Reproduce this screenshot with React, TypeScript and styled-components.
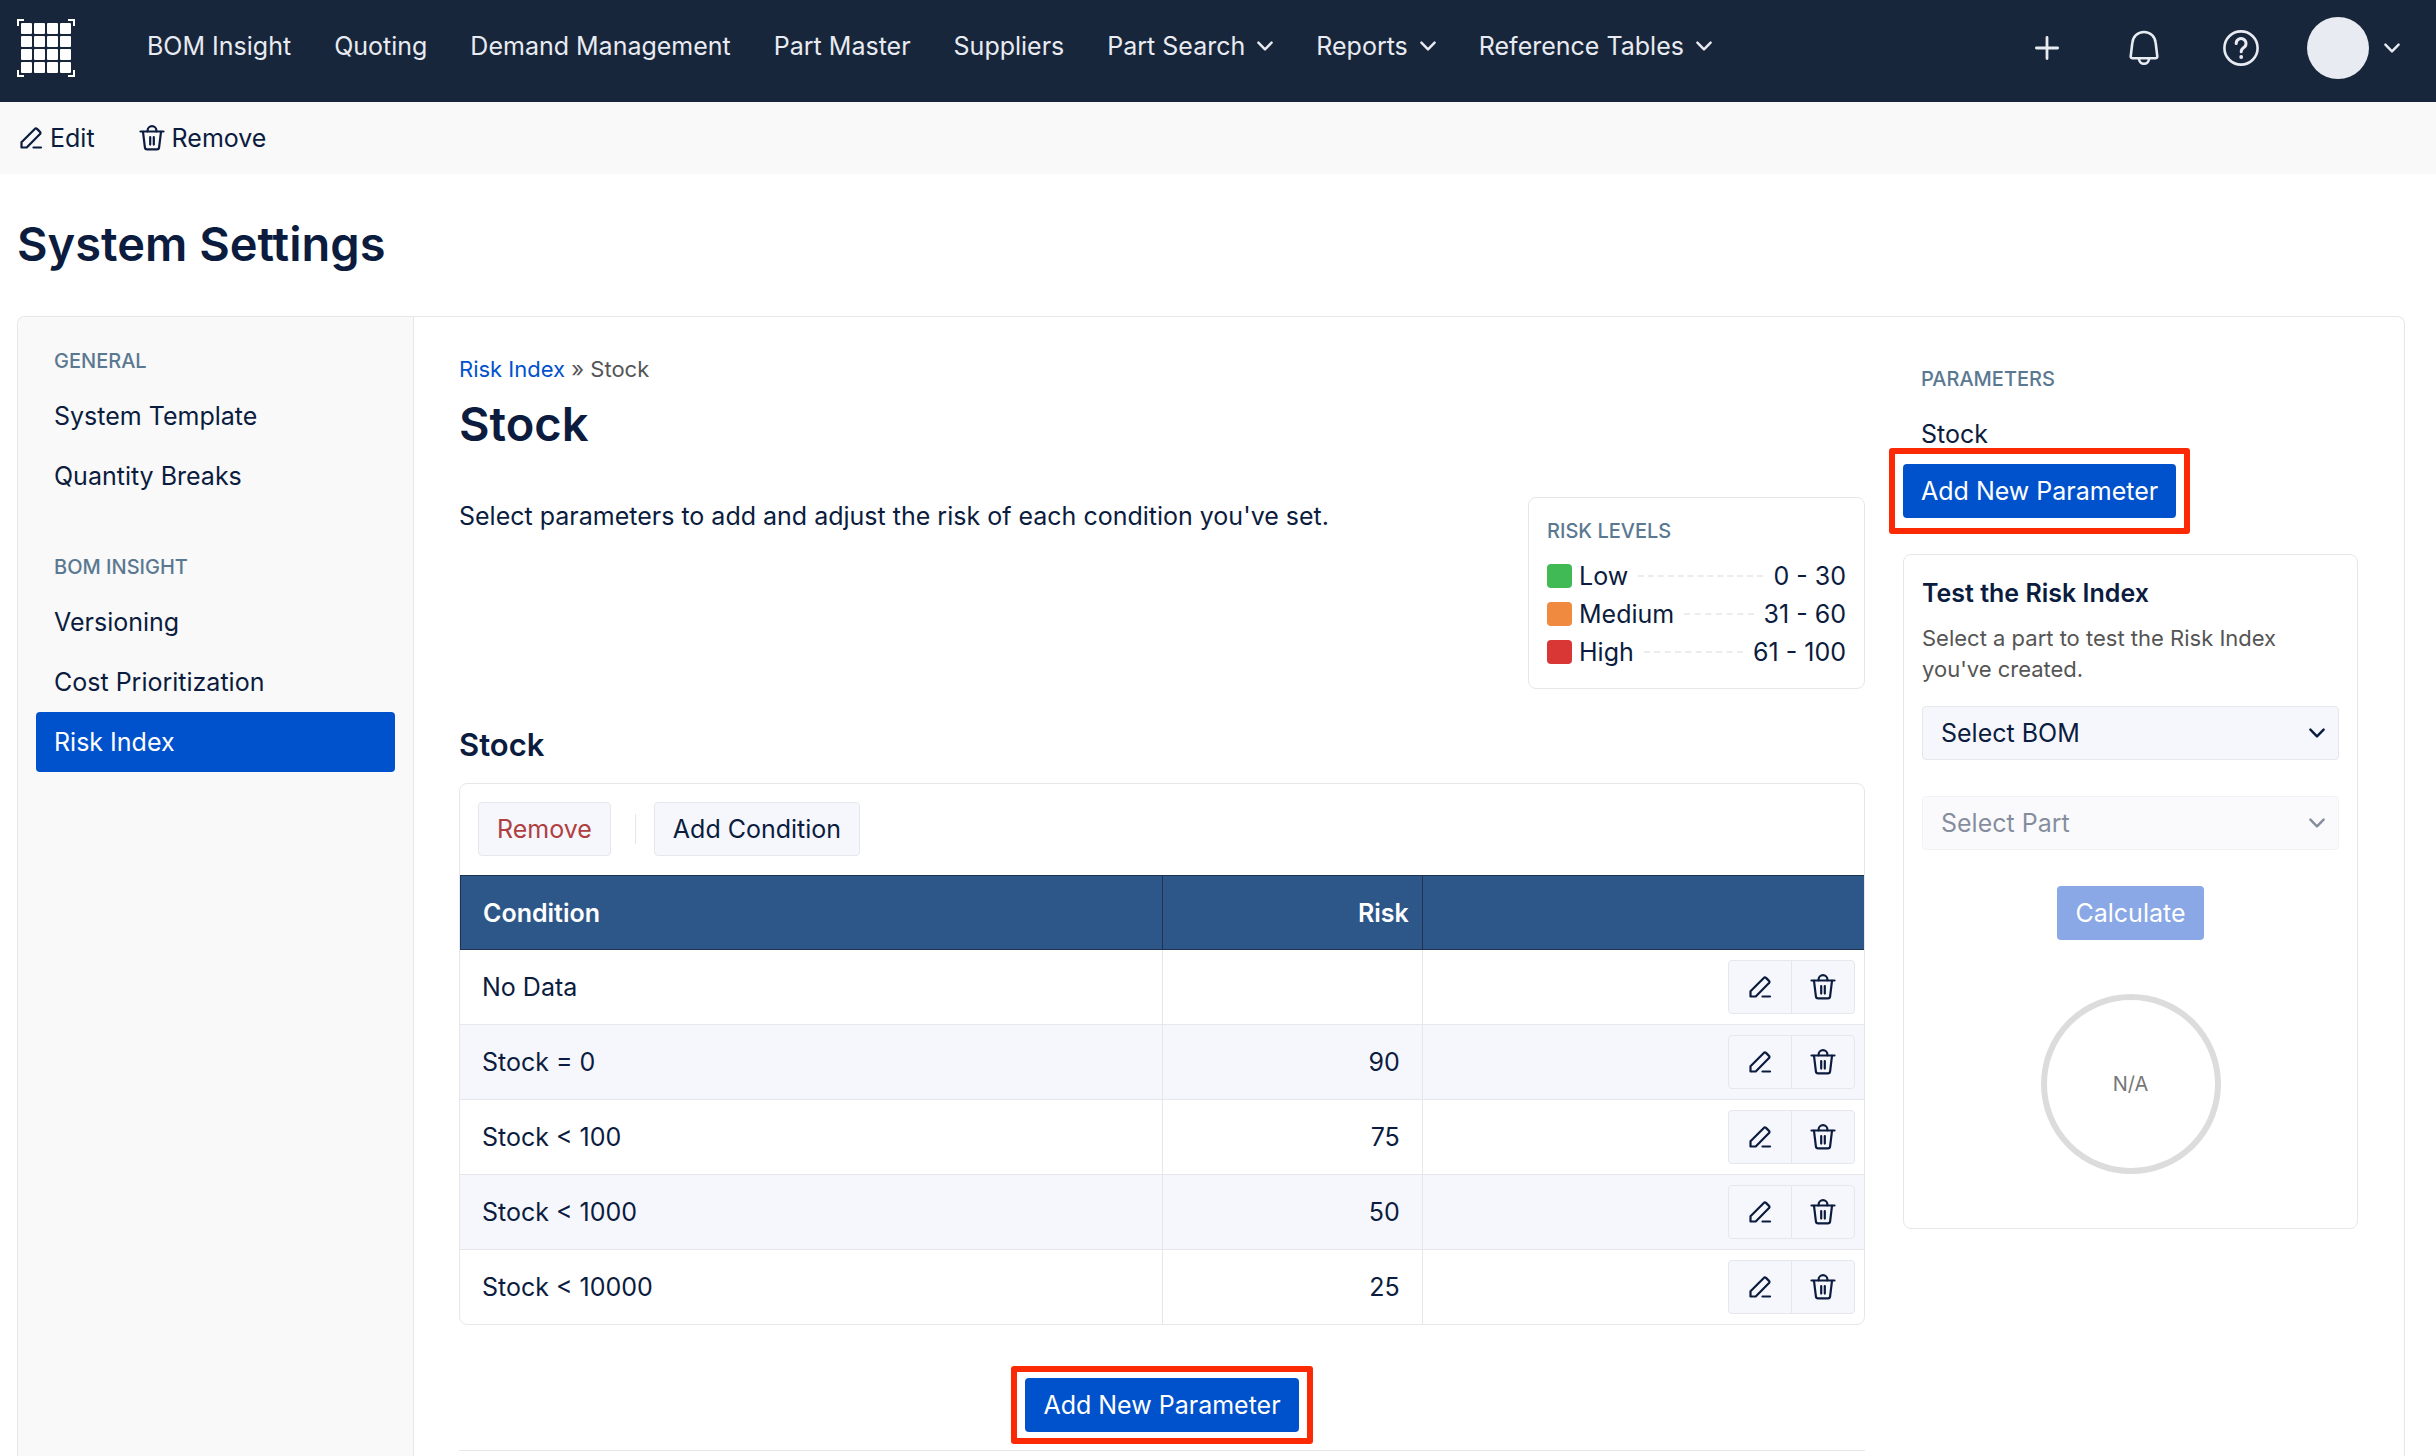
import React from "react";
import styled, { createGlobalStyle, css } from "styled-components";

const color = {
  navy: "#18263c",
  ink: "#0b1c3e",
  muted: "#5b7891",
  gray: "#555555",
  line: "#e6e7ea",
  soft: "#f9f9f9",
  tint: "#f6f7fd",
  blue: "#0052cc",
  header: "#2d5788",
  headerLine: "#1f3350",
  light: "#e8ebf1",
  mark: "#fb2a05",
};

const GlobalStyle = createGlobalStyle`
  *, *::before, *::after { box-sizing: border-box; }
  body {
    margin: 0;
    background: #ffffff;
    color: ${color.ink};
    font-family: Inter, "Liberation Sans", sans-serif;
    font-size: 25px;
    line-height: 32px;
  }
  button, select { font: inherit; color: inherit; }
  h1, h2, h3, p, ul, dl, dd { margin: 0; padding: 0; }
  ul { list-style: none; }
  a { color: inherit; text-decoration: none; }
`;

/* ---------- icons ---------- */

const Icon = styled.svg<{ $size: number }>`
  display: block;
  flex: none;
  width: ${(p) => p.$size}px;
  height: ${(p) => p.$size}px;
  fill: none;
  stroke: currentColor;
  stroke-linecap: round;
  stroke-linejoin: round;
`;

const ChevronDown = () => (
  <Icon $size={16} viewBox="0 0 16 16" strokeWidth="2.4" aria-hidden="true">
    <path d="M1.4 4.600 8 11.400l6.600-6.800" />
  </Icon>
);

const PenIcon = () => (
  <Icon $size={24} viewBox="0 0 24 24" strokeWidth="2.2" aria-hidden="true">
    <path d="M2.500 21.500v-5.200L15.800 2.900a1.500 1.500 0 0 1 2.200 0l3 3a1.500 1.500 0 0 1 0 2.200L7.700 21.500H2.500Z" />
    <path d="M14.500 21.500h7.500" />
  </Icon>
);

const TrashIcon = () => (
  <Icon $size={26} viewBox="0 0 26 26" strokeWidth="2.2" aria-hidden="true">
    <path d="M1.500 6.500h23" />
    <path d="M8.600 6.300V5.600a4.400 4.400 0 0 1 8.800 0v.7" />
    <path d="M4 6.800l1.900 15.600a2.200 2.200 0 0 0 2.200 2h9.800a2.200 2.200 0 0 0 2.200-2L22 6.800" />
    <path d="M11.200 12v7.600M14.800 12v7.600" />
  </Icon>
);

const PlusIcon = () => (
  <Icon $size={26} viewBox="0 0 26 26" strokeWidth="2.8" aria-hidden="true">
    <path d="M13 2.400v21.200M2.400 13h21.200" />
  </Icon>
);

const BellIcon = () => (
  <Icon $size={36} viewBox="0 0 36 36" strokeWidth="2.6" aria-hidden="true">
    <path d="M18 2C11.400 2 6.900 6.800 6.300 13L4.700 26.400a1.700 1.700 0 0 0 1.700 1.900h23.200a1.700 1.700 0 0 0 1.700-1.900L29.700 13C29.100 6.800 24.600 2 18 2Z" />
    <path d="M13 28.500a5 5.300 0 0 0 10 0" />
  </Icon>
);

const HelpIcon = () => (
  <Icon $size={38} viewBox="0 0 38 38" strokeWidth="2.6" aria-hidden="true">
    <circle cx="19" cy="19" r="16.600" />
    <path d="M14.200 14.600a4.900 4.900 0 1 1 7.600 4c-1.800 1.200-2.600 2-2.600 4.200" strokeWidth="3" />
    <circle cx="19.200" cy="28" r="1.900" fill="currentColor" stroke="none" />
  </Icon>
);

const LogoMark = () => {
  const steps = [0, 1, 2, 3];
  return (
    <Icon $size={58} viewBox="0 0 58 58" aria-hidden="true">
      {steps.map((r) =>
        steps.map((c) => (
          <rect key={`${r}-${c}`} x={4 + c * 13} y={4 + r * 13} width="11" height="11" rx="1" fill="#fff" stroke="none" />
        ))
      )}
      <path
        d="M1 7V1h6M51 1h6v6M57 51v6h-6M7 57H1v-6"
        stroke="#fff"
        strokeWidth="2"
        strokeLinecap="butt"
        strokeLinejoin="miter"
      />
    </Icon>
  );
};

/* ---------- shell ---------- */

const Page = styled.div`
  display: flex;
  flex-direction: column;
  min-height: 100vh;
`;

const TopBar = styled.header`
  display: flex;
  align-items: center;
  height: 102px;
  padding: 0 36px 6px 17px;
  background: ${color.navy};
  color: ${color.light};
`;

const MainNav = styled.nav`
  display: flex;
  align-items: center;
  gap: 43px;
  margin-left: 72px;
  padding-bottom: 4px;
`;

const NavLink = styled.a`
  display: flex;
  align-items: center;
  gap: 12px;
  white-space: nowrap;
`;

const TopActions = styled.div`
  display: flex;
  align-items: center;
  margin-left: auto;
  gap: 60px;
`;

const IconButton = styled.button`
  display: flex;
  align-items: center;
  justify-content: center;
  padding: 0;
  border: 0;
  background: none;
`;

const TopButton = styled(IconButton)`
  width: 37px;
`;

const AccountButton = styled(IconButton)`
  gap: 15px;
  margin-left: -12px;
`;

const Avatar = styled.span`
  width: 62px;
  height: 62px;
  border-radius: 50%;
  background: ${color.light};
`;

const ActionBar = styled.div`
  display: flex;
  align-items: center;
  gap: 44px;
  height: 72px;
  padding: 0 19px;
  background: ${color.soft};
`;

const ActionButton = styled(IconButton)`
  gap: 7px;
`;

const PageTitle = styled.h1`
  font-size: 47px;
  line-height: 60px;
  font-weight: 600;
`;

const TitleRow = styled.div`
  padding: 40px 17px 42px;
`;

const Panel = styled.div`
  display: flex;
  flex: 1;
  margin: 0 31px 0 17px;
  border: 1px solid ${color.line};
  border-bottom: 0;
  border-radius: 8px 8px 0 0;
`;

/* ---------- side menu ---------- */

const SideMenu = styled.nav`
  display: flex;
  flex: none;
  flex-direction: column;
  gap: 46px;
  width: 396px;
  padding: 29px 18px;
  border-right: 1px solid ${color.line};
  border-radius: 7px 0 0 0;
  background: ${color.soft};
`;

const Caption = styled.h3`
  font-size: 20px;
  line-height: 30px;
  font-weight: 500;
  color: ${color.muted};
  text-transform: uppercase;
`;

const MenuCaption = styled(Caption)`
  padding: 0 18px;
  margin-bottom: 10px;
`;

const MenuLink = styled.a<{ $active?: boolean }>`
  display: block;
  padding: 14px 18px;
  border-radius: 4px;
  ${(p) =>
    p.$active &&
    css`
      background: ${color.blue};
      color: #ffffff;
    `}
`;

/* ---------- centre column ---------- */

const Content = styled.main`
  flex: 1;
  min-width: 0;
  padding: 36px 38px 4px 45px;
`;

const Breadcrumb = styled.nav`
  font-size: 22px;
  line-height: 32px;
  color: ${color.gray};
  a { color: ${color.blue}; }
`;

const SectionTitle = styled.h2`
  margin-top: 9px;
  font-size: 47px;
  line-height: 60px;
  font-weight: 600;
`;

const IntroRow = styled.div`
  display: flex;
  align-items: flex-start;
  justify-content: space-between;
  margin-top: 43px;
`;

const Intro = styled.p`
  padding-top: 3px;
`;

const Card = styled.section`
  border: 1px solid ${color.line};
  border-radius: 8px;
`;

const RiskCard = styled(Card)`
  width: 337px;
  padding: 18px 18px 20px;
`;

const LevelList = styled.dl`
  display: grid;
  gap: 6px;
  margin-top: 14px;
`;

const Level = styled.div`
  display: flex;
  align-items: center;
`;

const Swatch = styled.span<{ $color: string }>`
  width: 25px;
  height: 24px;
  margin-right: 7px;
  border-radius: 4px;
  background: ${(p) => p.$color};
`;

const Leader = styled.span`
  flex: 1;
  margin: 0 10px;
  border-top: 2px dashed #ececee;
`;

const GroupTitle = styled.h3`
  margin-top: 36px;
  font-size: 31px;
  line-height: 40px;
  font-weight: 600;
`;

const TableCard = styled(Card)`
  margin-top: 18px;
  overflow: hidden;
`;

const TableTools = styled.div`
  display: flex;
  align-items: center;
  padding: 18px 18px 19px;
`;

const Button = styled.button<{ $danger?: boolean }>`
  padding: 10px 18px;
  border: 1px solid ${color.line};
  border-radius: 4px;
  background: ${color.tint};
  color: ${(p) => (p.$danger ? "#b04040" : color.ink)};
  white-space: nowrap;
`;

const PrimaryButton = styled.button`
  padding: 11px 18px;
  border: 0;
  border-radius: 4px;
  background: ${color.blue};
  color: #ffffff;
  white-space: nowrap;
  &:disabled { background: #8aa8e5; }
`;

const Divider = styled.span`
  width: 1px;
  height: 30px;
  margin: 0 18px 0 24px;
  background: ${color.line};
`;

const Table = styled.table`
  width: 100%;
  table-layout: fixed;
  border-collapse: separate;
  border-spacing: 0;
`;

const HeadCell = styled.th<{ $width?: string; $right?: boolean }>`
  width: ${(p) => p.$width ?? "auto"};
  height: 75px;
  padding: 0 13px 0 22px;
  border: 1px solid ${color.headerLine};
  border-right: 0;
  background: ${color.header};
  color: #ffffff;
  font-weight: 600;
  text-align: ${(p) => (p.$right ? "right" : "left")};
`;

const Cell = styled.td<{ $right?: boolean }>`
  height: 75px;
  padding: 0 22px;
  border-bottom: 1px solid ${color.line};
  text-align: ${(p) => (p.$right ? "right" : "left")};
  & + & { border-left: 1px solid ${color.line}; }
`;

const ToolsCell = styled(Cell)`
  padding: 0 9px;
  border-left: 1px solid ${color.line};
`;

const Row = styled.tr`
  &:nth-child(even) { background: ${color.tint}; }
  &:last-child > td { height: 74px; border-bottom: 0; }
`;

const RowTools = styled.div`
  display: flex;
  justify-content: flex-end;
`;

const RowTool = styled.button`
  display: flex;
  align-items: center;
  justify-content: center;
  width: 64px;
  height: 54px;
  padding: 0;
  border: 1px solid ${color.line};
  background: ${color.tint};
  &:first-child { border-radius: 4px 0 0 4px; }
  &:last-child { margin-left: -1px; border-radius: 0 4px 4px 0; }
`;

const AddRow = styled.div`
  display: flex;
  justify-content: center;
  padding: 53px 0 18px;
  border-bottom: 1px solid ${color.line};
`;

/* Red call-out frame laid over the area around a button. */
const Highlight = styled.div<{ $tight?: boolean }>`
  position: relative;
  width: fit-content;
  &::after {
    content: "";
    position: absolute;
    inset: ${(p) => (p.$tight ? "-12px -14px" : "-16px -14px")};
    border: 6px solid ${color.mark};
    border-radius: 3px;
    pointer-events: none;
  }
`;

/* ---------- right column ---------- */

const Aside = styled.aside`
  flex: none;
  width: 501px;
  padding: 47px 46px 0 0;
`;

const TestCard = styled(Card)`
  margin-top: 36px;
  padding: 20px 18px 54px;
`;

const CardTitle = styled.h3`
  font-size: 25px;
  line-height: 36px;
  font-weight: 600;
`;

const Note = styled.p`
  margin: 12px 0 21px;
  font-size: 22px;
  line-height: 31px;
  color: ${color.gray};
`;

const SelectField = styled.label<{ $disabled?: boolean }>`
  position: relative;
  display: block;
  margin-bottom: 36px;
  opacity: ${(p) => (p.$disabled ? 0.5 : 1)};
  svg {
    position: absolute;
    top: 19px;
    right: 14px;
    pointer-events: none;
  }
`;

const Select = styled.select`
  display: block;
  width: 100%;
  height: 54px;
  padding: 0 18px;
  appearance: none;
  border: 1px solid ${color.line};
  border-radius: 4px;
  background: ${color.tint};
  &:disabled { color: inherit; opacity: 1; }
`;

const Result = styled.div`
  display: flex;
  flex-direction: column;
  align-items: center;
  gap: 54px;
`;

const Gauge = styled.div`
  display: flex;
  align-items: center;
  justify-content: center;
  width: 180px;
  height: 180px;
  border: 6px solid #dddcdd;
  border-radius: 50%;
  font-size: 20px;
  color: #777777;
`;

/* ---------- data ---------- */

const navItems: { label: string; menu?: boolean }[] = [
  { label: "BOM Insight" },
  { label: "Quoting" },
  { label: "Demand Management" },
  { label: "Part Master" },
  { label: "Suppliers" },
  { label: "Part Search", menu: true },
  { label: "Reports", menu: true },
  { label: "Reference Tables", menu: true },
];

const menuGroups = [
  { title: "General", items: ["System Template", "Quantity Breaks"] },
  { title: "BOM Insight", items: ["Versioning", "Cost Prioritization", "Risk Index"] },
];

const levels = [
  { name: "Low", range: "0 - 30", color: "#3fba54" },
  { name: "Medium", range: "31 - 60", color: "#f08a3e" },
  { name: "High", range: "61 - 100", color: "#d93636" },
];

const conditions: { name: string; risk?: number }[] = [
  { name: "No Data" },
  { name: "Stock = 0", risk: 90 },
  { name: "Stock < 100", risk: 75 },
  { name: "Stock < 1000", risk: 50 },
  { name: "Stock < 10000", risk: 25 },
];

export default function App() {
  return (
    <Page>
      <GlobalStyle />
      <TopBar>
        <a href="#home" aria-label="Home"><LogoMark /></a>
        <MainNav>
          {navItems.map((item) => (
            <NavLink key={item.label} href="#nav">
              {item.label}
              {item.menu && <ChevronDown />}
            </NavLink>
          ))}
        </MainNav>
        <TopActions>
          <TopButton aria-label="Add"><PlusIcon /></TopButton>
          <TopButton aria-label="Notifications"><BellIcon /></TopButton>
          <TopButton aria-label="Help"><HelpIcon /></TopButton>
          <AccountButton aria-label="Account">
            <Avatar />
            <ChevronDown />
          </AccountButton>
        </TopActions>
      </TopBar>

      <ActionBar>
        <ActionButton><PenIcon />Edit</ActionButton>
        <ActionButton><TrashIcon />Remove</ActionButton>
      </ActionBar>

      <TitleRow><PageTitle>System Settings</PageTitle></TitleRow>

      <Panel>
        <SideMenu>
          {menuGroups.map((group) => (
            <div key={group.title}>
              <MenuCaption>{group.title}</MenuCaption>
              <ul>
                {group.items.map((item) => (
                  <li key={item}>
                    <MenuLink href="#settings" $active={item === "Risk Index"}>{item}</MenuLink>
                  </li>
                ))}
              </ul>
            </div>
          ))}
        </SideMenu>

        <Content>
          <Breadcrumb><a href="#risk-index">Risk Index</a> » Stock</Breadcrumb>
          <SectionTitle>Stock</SectionTitle>
          <IntroRow>
            <Intro>Select parameters to add and adjust the risk of each condition you've set.</Intro>
            <RiskCard>
              <Caption>Risk Levels</Caption>
              <LevelList>
                {levels.map((level) => (
                  <Level key={level.name}>
                    <Swatch $color={level.color} />
                    <dt>{level.name}</dt>
                    <Leader />
                    <dd>{level.range}</dd>
                  </Level>
                ))}
              </LevelList>
            </RiskCard>
          </IntroRow>

          <GroupTitle>Stock</GroupTitle>
          <TableCard>
            <TableTools>
              <Button $danger>Remove</Button>
              <Divider />
              <Button>Add Condition</Button>
            </TableTools>
            <Table>
              <thead>
                <tr>
                  <HeadCell $width="50%">Condition</HeadCell>
                  <HeadCell $width="18.5%" $right>Risk</HeadCell>
                  <HeadCell aria-label="Actions" />
                </tr>
              </thead>
              <tbody>
                {conditions.map((row) => (
                  <Row key={row.name}>
                    <Cell>{row.name}</Cell>
                    <Cell $right>{row.risk}</Cell>
                    <ToolsCell>
                      <RowTools>
                        <RowTool aria-label="Edit condition"><PenIcon /></RowTool>
                        <RowTool aria-label="Remove condition"><TrashIcon /></RowTool>
                      </RowTools>
                    </ToolsCell>
                  </Row>
                ))}
              </tbody>
            </Table>
          </TableCard>

          <AddRow>
            <Highlight $tight><PrimaryButton>Add New Parameter</PrimaryButton></Highlight>
          </AddRow>
        </Content>

        <Aside>
          <MenuCaption>Parameters</MenuCaption>
          <MenuLink href="#stock">Stock</MenuLink>
          <Highlight><PrimaryButton>Add New Parameter</PrimaryButton></Highlight>
          <TestCard>
            <CardTitle>Test the Risk Index</CardTitle>
            <Note>Select a part to test the Risk Index you've created.</Note>
            <SelectField>
              <Select aria-label="BOM"><option>Select BOM</option></Select>
              <ChevronDown />
            </SelectField>
            <SelectField $disabled>
              <Select aria-label="Part" disabled><option>Select Part</option></Select>
              <ChevronDown />
            </SelectField>
            <Result>
              <PrimaryButton disabled>Calculate</PrimaryButton>
              <Gauge>N/A</Gauge>
            </Result>
          </TestCard>
        </Aside>
      </Panel>
    </Page>
  );
}
